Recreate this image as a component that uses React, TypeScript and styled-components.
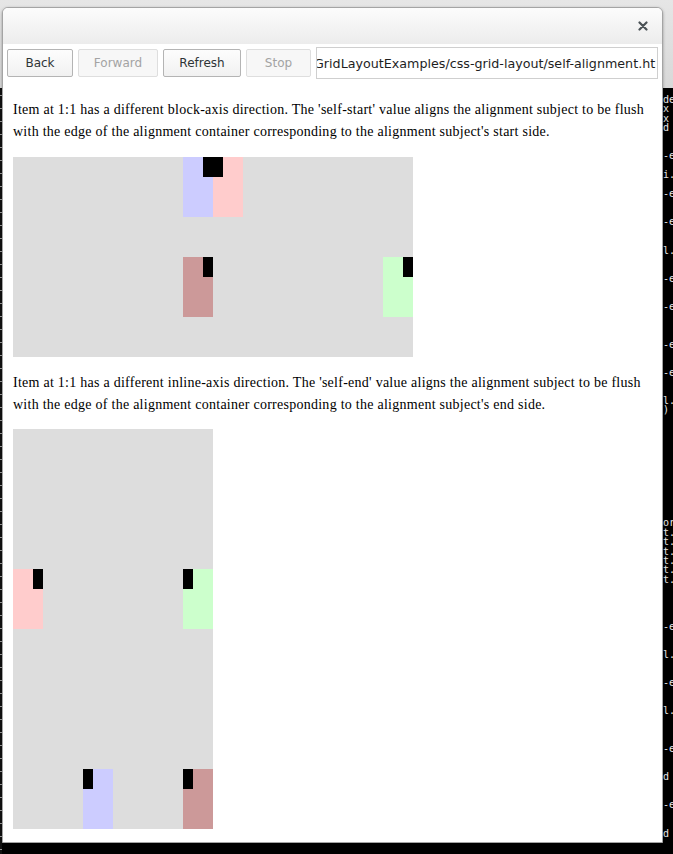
import styled, { createGlobalStyle } from 'styled-components';

const GlobalStyle = createGlobalStyle`
    html, body {
        margin: 0;
        padding: 0;
        background: #000;
    }
`;

const Desktop = styled.div`
    position: relative;
    width: 673px;
    height: 854px;
    overflow: hidden;
    background: #000;
`;

/* terminal window sitting behind the browser */
const Terminal = styled.div`
    position: absolute;
    inset: 0;
    display: flex;
    flex-direction: column;
`;

const TerminalBar = styled.div`
    height: 88px;
    background: linear-gradient(#e6e6e6, #d8d8d8);
`;

const TerminalBody = styled.div`
    flex: 1;
    display: flex;
    justify-content: space-between;
    background: #000;
`;

const LeftEdge = styled.div`
    width: 2px;
    background: repeating-linear-gradient(
        #111 0px,
        #111 7px,
        #9a9a9a 7px,
        #9a9a9a 8px,
        #111 8px,
        #111 13px
    );
`;

const TermText = styled.pre`
    margin: 0;
    padding-top: 7px;
    width: 10px;
    overflow: hidden;
    color: #e8e8e8;
    font-family: 'DejaVu Sans Mono', 'Liberation Mono', monospace;
    font-size: 10px;
    line-height: 9.4px;
`;

const Window = styled.div`
    position: absolute;
    left: 2px;
    top: 7px;
    width: 661px;
    height: 836px;
    box-sizing: border-box;
    border: 1px solid #a4a4a4;
    border-radius: 6px 6px 0 0;
    background: #fff;
    box-shadow: 0 1px 3px rgba(0, 0, 0, 0.35);
    display: flex;
    flex-direction: column;
    overflow: hidden;
`;

const Header = styled.div`
    height: 36px;
    display: flex;
    align-items: center;
    justify-content: flex-end;
    padding-right: 13px;
    background: linear-gradient(#fcfcfc, #ececec);
`;

const CloseButton = styled.button`
    border: none;
    background: none;
    padding: 0;
    width: 12px;
    height: 12px;
    display: flex;
    align-items: center;
    justify-content: center;
    color: #4b5256;
`;

const Toolbar = styled.div`
    height: 38px;
    display: flex;
    align-items: center;
    gap: 5px;
    padding: 0 4px;
    background: #fff;
`;

const ToolButton = styled.button<{ $width: number; $disabled?: boolean }>`
    width: ${(p) => p.$width}px;
    height: 28px;
    box-sizing: border-box;
    border: 1px solid ${(p) => (p.$disabled ? '#dedede' : '#b4b4b4')};
    border-radius: 2px;
    background: ${(p) => (p.$disabled ? '#f7f7f7' : 'linear-gradient(#fdfdfd, #f1f1f1)')};
    color: ${(p) => (p.$disabled ? '#a3a3a3' : '#2e3436')};
    font-family: 'DejaVu Sans', Verdana, sans-serif;
    font-size: 12px;
    padding: 0;
`;

const UrlField = styled.div`
    width: 342px;
    height: 32px;
    box-sizing: border-box;
    border: 1px solid #cfcfcf;
    background: #fff;
    display: flex;
    align-items: center;
    overflow: hidden;
    white-space: nowrap;
    font-family: 'DejaVu Sans', Verdana, sans-serif;
    font-size: 12.7px;
    color: #1e1e1e;
`;

const UrlText = styled.span`
    margin-left: -3px;
`;

const Content = styled.div`
    flex: 1;
    padding: 17px 10px 0;
    font-family: 'Liberation Serif', 'Times New Roman', serif;
    font-size: 14px;
    letter-spacing: 0.26px;
    line-height: 22px;
    color: #000;
`;

const Para = styled.p<{ $top: number }>`
    margin: ${(p) => p.$top}px 0 0;
    white-space: nowrap;
`;

const Grid = styled.div<{ $cols: string; $rows: string; $top: number }>`
    display: grid;
    grid-template-columns: ${(p) => p.$cols};
    grid-template-rows: ${(p) => p.$rows};
    width: max-content;
    margin-top: ${(p) => p.$top}px;
    background: #dddddd;
`;

const Item = styled.div<{ $bg: string; $col: number; $row: number; $end?: boolean }>`
    grid-column: ${(p) => p.$col};
    grid-row: ${(p) => p.$row};
    background: ${(p) => p.$bg};
    display: flex;
    justify-content: ${(p) => (p.$end ? 'flex-end' : 'flex-start')};
    align-items: flex-start;
`;

const Marker = styled.div`
    width: 10px;
    height: 20px;
    background: #000;
`;

const termRows: Record<number, string> = {
    0: 'de', 1: 'x', 2: 'x', 3: 'd', 6: '-e', 8: 'i.', 10: '-e', 13: '-e',
    16: 'l.', 19: '-e', 22: '-e', 26: '-e', 29: '-e', 32: 'l.', 33: ')',
    45: 'or', 46: 't.', 47: 't.', 48: 't.', 49: 't.',
    50: 't.', 51: 't.', 56: '-e', 59: 'l.', 62: '-e', 65: 'l.', 69: '-e',
    72: 'd', 75: '-e', 78: 'd',
};

const termText = Array.from({ length: 80 }, (_, i) => termRows[i] ?? '').join('\n');

const BLUE = '#ccccff';
const PINK = '#ffcccc';
const BROWN = '#cc9999';
const GREEN = '#ccffcc';

export default function App() {
    return (
        <Desktop>
            <GlobalStyle />
            <Terminal>
                <TerminalBar />
                <TerminalBody>
                    <LeftEdge />
                    <TermText>{termText}</TermText>
                </TerminalBody>
            </Terminal>

            <Window>
                <Header>
                    <CloseButton aria-label="Close">
                        <svg width="10" height="10" viewBox="0 0 10 10">
                            <path d="M1.5 1.5 L8.5 8.5 M8.5 1.5 L1.5 8.5" stroke="currentColor" strokeWidth="2.2" strokeLinecap="round" />
                        </svg>
                    </CloseButton>
                </Header>

                <Toolbar>
                    <ToolButton $width={66}>Back</ToolButton>
                    <ToolButton $width={80} $disabled>Forward</ToolButton>
                    <ToolButton $width={78}>Refresh</ToolButton>
                    <ToolButton $width={65} $disabled>Stop</ToolButton>
                    <UrlField>
                        <UrlText>GridLayoutExamples/css-grid-layout/self-alignment.ht</UrlText>
                    </UrlField>
                </Toolbar>

                <Content>
                    <Para $top={0}>
                        Item at 1:1 has a different block-axis direction. The 'self-start' value aligns the alignment subject to be flush
                        <br />
                        with the edge of the alignment container corresponding to the alignment subject's start side.
                    </Para>
                    <Grid $cols="170px 30px 30px 140px 30px" $rows="60px 40px 60px 40px" $top={14}>
                        <Item $bg={BLUE} $col={2} $row={1} $end><Marker /></Item>
                        <Item $bg={PINK} $col={3} $row={1}><Marker /></Item>
                        <Item $bg={BROWN} $col={2} $row={3} $end><Marker /></Item>
                        <Item $bg={GREEN} $col={5} $row={3} $end><Marker /></Item>
                    </Grid>

                    <Para $top={15}>
                        Item at 1:1 has a different inline-axis direction. The 'self-end' value aligns the alignment subject to be flush
                        <br />
                        with the edge of the alignment container corresponding to the alignment subject's end side.
                    </Para>
                    <Grid $cols="30px 40px 30px 70px 30px" $rows="140px 60px 140px 60px" $top={13}>
                        <Item $bg={PINK} $col={1} $row={2} $end><Marker /></Item>
                        <Item $bg={GREEN} $col={5} $row={2}><Marker /></Item>
                        <Item $bg={BLUE} $col={3} $row={4}><Marker /></Item>
                        <Item $bg={BROWN} $col={5} $row={4}><Marker /></Item>
                    </Grid>
                </Content>
            </Window>
        </Desktop>
    );
}
